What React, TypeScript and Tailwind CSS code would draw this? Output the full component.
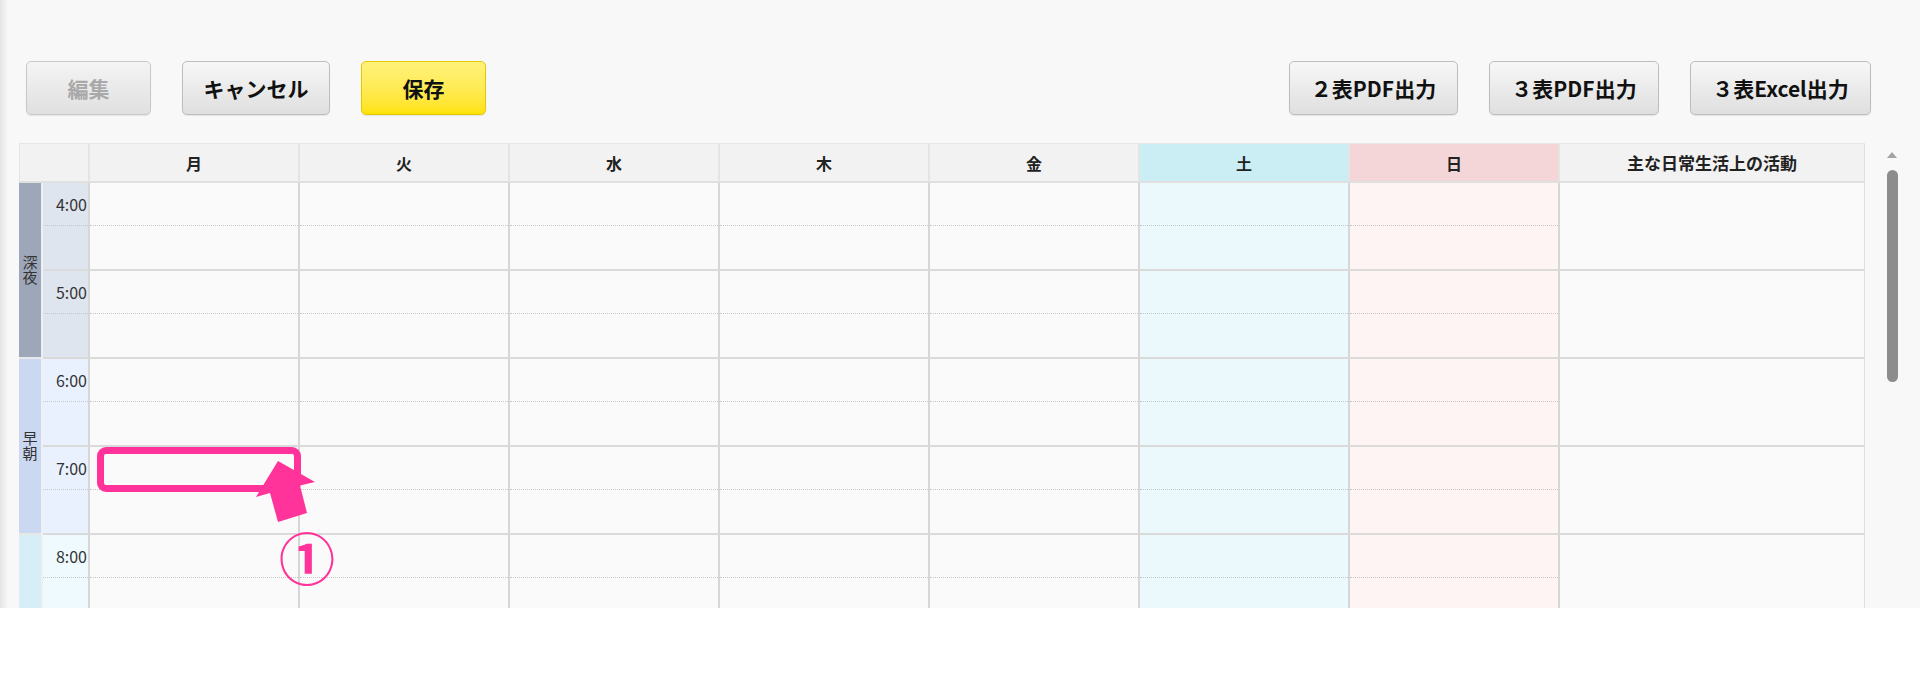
import type { ReactNode } from 'react'

const FONT = { fontFamily: '"Noto Sans CJK JP", "Noto Sans", sans-serif' }

type Band = {
  label: string
  hours: number[]
  bandBg: string
  timeBg: string
  height: number
}

// 時間帯ごとの帯と色（画面に入る範囲だけ）
const BANDS: Band[] = [
  { label: '深夜', hours: [4, 5], bandBg: 'bg-[#9ea7b9]', timeBg: 'bg-[#dfe5ee]', height: 176 },
  { label: '早朝', hours: [6, 7], bandBg: 'bg-[#cbd8f2]', timeBg: 'bg-[#eaf1fe]', height: 176 },
  { label: '', hours: [8], bandBg: 'bg-[#d8eef6]', timeBg: 'bg-[#eefafe]', height: 88 },
]

const DAYS = [
  { label: '月', head: 'bg-[#f2f2f2]', body: 'bg-[#fafafa]' },
  { label: '火', head: 'bg-[#f2f2f2]', body: 'bg-[#fafafa]' },
  { label: '水', head: 'bg-[#f2f2f2]', body: 'bg-[#fafafa]' },
  { label: '木', head: 'bg-[#f2f2f2]', body: 'bg-[#fafafa]' },
  { label: '金', head: 'bg-[#f2f2f2]', body: 'bg-[#fafafa]' },
  { label: '土', head: 'bg-[#cbeef4]', body: 'bg-[#ebf9fd]' },
  { label: '日', head: 'bg-[#f5d6d8]', body: 'bg-[#fdf4f3]' },
]

const Button = ({
  children,
  variant = 'default',
  width,
}: {
  children: ReactNode
  variant?: 'default' | 'disabled' | 'primary'
  width: string
}) => {
  const look =
    variant === 'primary'
      ? 'bg-gradient-to-b from-[#fff27a] to-[#ffe300] border-[#e3c900] text-[#111]'
      : variant === 'disabled'
        ? 'bg-gradient-to-b from-[#f4f4f4] to-[#e0e0e0] border-[#c8c8c8] text-[#a9a9a9]'
        : 'bg-gradient-to-b from-[#f7f7f7] to-[#dfdfdf] border-[#bdbdbd] text-[#111]'
  return (
    <button
      className={`${width} h-[54px] rounded-[5px] border text-[21px] font-bold leading-none shadow-[0_1px_1px_rgba(0,0,0,0.08)] ${look}`}
    >
      {children}
    </button>
  )
}

const HourRow = ({ hour, timeBg }: { hour: number; timeBg: string }) => (
  <div className="flex h-[88px] border-b-2 border-[#dadada]">
    {/* 時刻 */}
    <div className={`w-[47px] flex flex-col border-r-2 border-[#d6d6d6] ${timeBg}`}>
      <div className="h-[43px] flex items-center justify-end pr-[1px] border-b border-dotted border-[#c8c8c8] text-[16px] text-[#333]">
        {hour}:00
      </div>
      <div className="flex-1" />
    </div>
    {DAYS.map((d) => (
      <div key={d.label} className={`w-[210px] flex flex-col border-r-2 border-[#d6d6d6] ${d.body}`}>
        <div className="h-[43px] border-b border-dotted border-[#c8c8c8]" />
        <div className="flex-1" />
      </div>
    ))}
    <div className="w-[305px] bg-[#fafafa] border-r border-[#e0e0e0]" />
  </div>
)

export default function App() {
  return (
    <div className="w-full h-[674px] bg-white" style={FONT}>
      <div className="relative h-[608px] bg-[#f8f8f8] overflow-hidden">
        {/* 左端の影 */}
        <div className="absolute left-0 top-0 h-full w-[8px] bg-gradient-to-r from-[#e4e4e4] to-transparent" />

        {/* ツールバー */}
        <div className="flex justify-between pl-[26px] pr-[49px] pt-[61px]">
          <div className="flex gap-[31px]">
            <Button variant="disabled" width="w-[125px]">編集</Button>
            <Button width="w-[148px]">キャンセル</Button>
            <Button variant="primary" width="w-[125px]">保存</Button>
          </div>
          <div className="flex gap-[31px]">
            <Button width="w-[169px]">２表PDF出力</Button>
            <Button width="w-[170px]">３表PDF出力</Button>
            <Button width="w-[181px]">３表Excel出力</Button>
          </div>
        </div>

        {/* 週間表 */}
        <div className="flex mt-[28px] pl-[19px]">
          <div className="w-[1846px] h-[465px] overflow-hidden">
            <div className="flex h-[40px] border-t border-[#e6e6e6] border-b-2 border-b-[#e0e0e0] bg-[#f2f2f2] text-[16px] font-bold text-[#222]">
              <div className="w-[71px] border-l border-r-2 border-[#e4e4e4]" />
              {DAYS.map((d) => (
                <div
                  key={d.label}
                  className={`w-[210px] flex items-center justify-center border-r-2 border-[#e4e4e4] ${d.head}`}
                >
                  {d.label}
                </div>
              ))}
              <div className="w-[305px] flex items-center justify-center border-r border-[#e0e0e0] text-[17px]">
                主な日常生活上の活動
              </div>
            </div>

            <div className="flex">
              <div className="w-[24px] flex flex-col border-r-2 border-[#eef0f4]">
                {BANDS.map((b, i) => (
                  <div
                    key={i}
                    className={`flex items-center justify-center border-b-2 border-[#e8e8e8] text-[15px] leading-[15px] text-[#333] ${b.bandBg}`}
                    style={{ height: b.height }}
                  >
                    {b.label && <span className="[writing-mode:vertical-rl]">{b.label}</span>}
                  </div>
                ))}
              </div>
              <div className="flex flex-col">
                {BANDS.flatMap((b) =>
                  b.hours.map((h) => <HourRow key={h} hour={h} timeBg={b.timeBg} />),
                )}
              </div>
            </div>
          </div>

          {/* スクロールバー */}
          <div className="ml-[21px] w-[12px] flex flex-col items-center">
            <div className="mt-[9px] w-0 h-0 border-l-[5px] border-r-[5px] border-b-[6px] border-l-transparent border-r-transparent border-b-[#a3a3a3]" />
            <div className="mt-[12px] w-[11px] h-[212px] rounded-full bg-[#8c8c8c]" />
          </div>
        </div>

        {/* 注釈 */}
        <div className="absolute left-[97px] top-[447px] w-[204px] h-[45px] rounded-[9px] border-[7px] border-[#ff3399]" />
        <svg className="absolute left-0 top-0 pointer-events-none" width="1920" height="608">
          <polygon
            points="278,461 315,482 300,485.5 307,513 278,522 270,493 256,497"
            fill="#ff3399"
          />
        </svg>
        <span className="absolute left-[307px] top-[556px] -translate-x-1/2 -translate-y-1/2 text-[56px] leading-none font-bold text-[#ff3399]">
          ①
        </span>
      </div>
    </div>
  )
}
